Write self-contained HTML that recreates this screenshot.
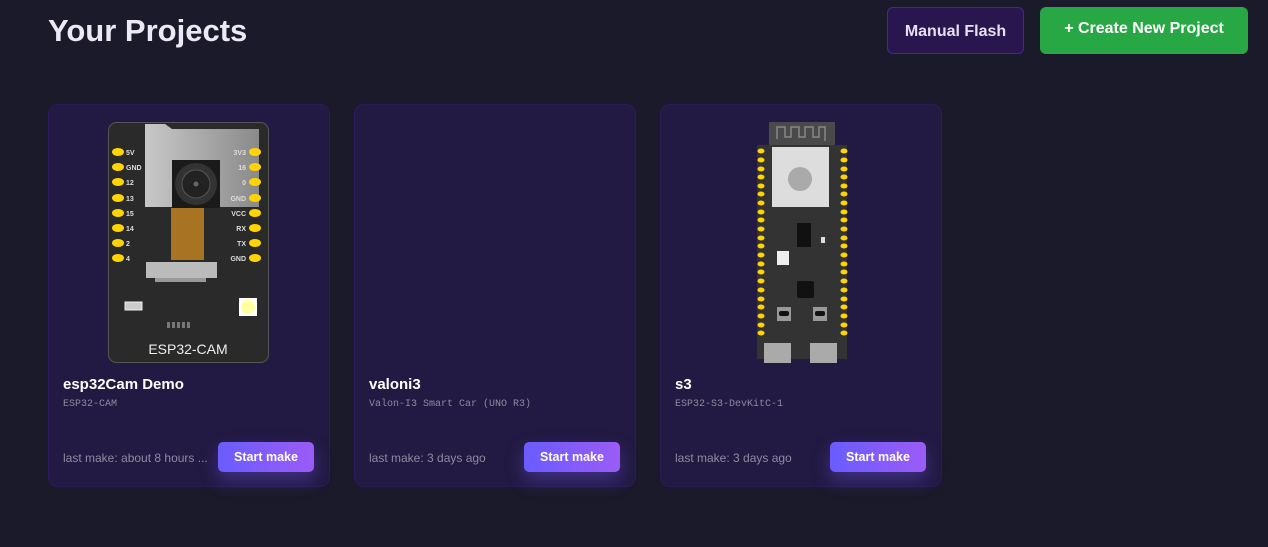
<!DOCTYPE html>
<html><head><meta charset="utf-8"><style>
*{box-sizing:border-box;margin:0;padding:0}
body{width:1268px;height:547px;background:#1b1a2b;font-family:"Liberation Sans",sans-serif;position:relative;overflow:hidden;color:#fff}
h1{position:absolute;left:48px;top:13px;font-size:31px;font-weight:bold;color:#ece8f4}
.mf{position:absolute;left:887px;top:7px;width:137px;height:47px;border:1px solid #4a23a0;border-radius:6px;background:#29164f;color:#e6e0f2;font-weight:bold;font-size:16px;text-align:center;line-height:47px}
.cn{position:absolute;left:1040px;top:7px;width:208px;height:47px;border-radius:6px;background:#28a745;color:#fff;font-weight:bold;font-size:16px;text-align:center;line-height:44px}
.card{position:absolute;top:104px;width:282px;height:383px;border:1px solid #2d1a5a;border-radius:10px;background:#221a42}
.t{position:absolute;left:14px;top:271px;font-size:15px;font-weight:bold;color:#fff}
.s{position:absolute;left:14px;top:294px;font-size:10px;font-family:"Liberation Mono",monospace;color:#8f8aa0}
.lm{position:absolute;left:14px;top:346px;font-size:12px;color:#8f8aa0}
.b{position:absolute;left:169px;top:337px;width:96px;height:30px;border-radius:5px;background:linear-gradient(90deg,#6a5cff,#9b5cf6);color:#fff;font-size:12.5px;font-weight:bold;text-align:center;line-height:30px;box-shadow:0 8px 18px rgba(120,90,255,.35)}
</style></head><body>
<h1>Your Projects</h1>
<div class="mf">Manual Flash</div>
<div class="cn">+ Create New Project</div>

<div class="card" style="left:48px">
<svg style="position:absolute;left:59px;top:17px" width="162" height="242" viewBox="0 0 162 242">
<defs><linearGradient id="g"><stop offset="0" stop-color="#c8c8c8"/><stop offset="1" stop-color="#8a8a8a"/></linearGradient></defs>
<rect x="0.5" y="0.5" width="160" height="240" rx="8" fill="#2a2a2a" stroke="#555"/>
<polygon points="37,2 57,2 64,7 151,7 151,85 37,85" fill="url(#g)"/>
<rect x="64" y="38" width="48" height="48" fill="#1a1a1a"/>
<circle cx="88" cy="62" r="21" fill="#333"/><circle cx="88" cy="62" r="14" fill="#222" stroke="#555"/><circle cx="88" cy="62" r="2.5" fill="#666"/>
<rect x="63" y="86" width="33" height="52" fill="#a87424"/>
<rect x="38" y="140" width="71" height="16" fill="#bbb"/><rect x="47" y="156" width="51" height="4" fill="#999"/>
<rect x="17" y="180" width="17" height="8" fill="#ccc" stroke="#eee"/>
<rect x="131" y="176" width="18" height="18" fill="#fff"/><circle cx="140" cy="185" r="7" fill="#ffffa0"/>
<g fill="#777"><rect x="59" y="200" width="3" height="6"/><rect x="64" y="200" width="3" height="6"/><rect x="69" y="200" width="3" height="6"/><rect x="74" y="200" width="3" height="6"/><rect x="79" y="200" width="3" height="6"/></g>
<text x="80" y="232" font-size="14" fill="#eee" text-anchor="middle" font-family="Liberation Sans">ESP32-CAM</text>
<g fill="#ffd400">
<ellipse cx="10" cy="30" rx="6" ry="4"/><ellipse cx="10" cy="45" rx="6" ry="4"/><ellipse cx="10" cy="60" rx="6" ry="4"/><ellipse cx="10" cy="76" rx="6" ry="4"/><ellipse cx="10" cy="91" rx="6" ry="4"/><ellipse cx="10" cy="106" rx="6" ry="4"/><ellipse cx="10" cy="121" rx="6" ry="4"/><ellipse cx="10" cy="136" rx="6" ry="4"/>
<ellipse cx="147" cy="30" rx="6" ry="4"/><ellipse cx="147" cy="45" rx="6" ry="4"/><ellipse cx="147" cy="60" rx="6" ry="4"/><ellipse cx="147" cy="76" rx="6" ry="4"/><ellipse cx="147" cy="91" rx="6" ry="4"/><ellipse cx="147" cy="106" rx="6" ry="4"/><ellipse cx="147" cy="121" rx="6" ry="4"/><ellipse cx="147" cy="136" rx="6" ry="4"/></g>
<g fill="#ddd" font-size="7" font-weight="bold" font-family="Liberation Sans">
<text x="18" y="33">5V</text><text x="18" y="48">GND</text><text x="18" y="63">12</text><text x="18" y="79">13</text><text x="18" y="94">15</text><text x="18" y="109">14</text><text x="18" y="124">2</text><text x="18" y="139">4</text>
<g text-anchor="end"><text x="138" y="33">3V3</text><text x="138" y="48">16</text><text x="138" y="63">0</text><text x="138" y="79">GND</text><text x="138" y="94">VCC</text><text x="138" y="109">RX</text><text x="138" y="124">TX</text><text x="138" y="139">GND</text></g></g>
</svg>
<div class="t">esp32Cam Demo</div><div class="s">ESP32-CAM</div>
<div class="lm">last make: about 8 hours ...</div><div class="b">Start make</div>
</div>

<div class="card" style="left:354px">
<div class="t">valoni3</div><div class="s">Valon-I3 Smart Car (UNO R3)</div>
<div class="lm">last make: 3 days ago</div><div class="b">Start make</div>
</div>

<div class="card" style="left:660px">
<svg style="position:absolute;left:96px;top:16px" width="92" height="244" viewBox="0 0 92 244">
<rect x="12" y="1" width="66" height="24" fill="#4a4a4a"/>
<path d="M20 18V6h8v10h6V6h8v10h6V6h8v10h6V6h6v14" stroke="#888" fill="none" stroke-width="1.5"/>
<rect x="0" y="24" width="90" height="214" fill="#333"/>
<rect x="15" y="26" width="57" height="60" fill="#ddd"/>
<circle cx="43" cy="58" r="12" fill="#aaa"/>
<rect x="40" y="102" width="14" height="24" fill="#111"/><rect x="64" y="116" width="4" height="6" fill="#ddd"/>
<rect x="20" y="130" width="12" height="14" fill="#eee"/>
<rect x="40" y="160" width="17" height="17" rx="2" fill="#111"/>
<rect x="20" y="186" width="14" height="14" fill="#999"/><rect x="22" y="190" width="10" height="5" rx="2" fill="#111"/>
<rect x="56" y="186" width="14" height="14" fill="#999"/><rect x="58" y="190" width="10" height="5" rx="2" fill="#111"/>
<rect x="7" y="222" width="27" height="20" fill="#aaa"/><rect x="53" y="222" width="27" height="20" fill="#aaa"/>
<g fill="#ffd400">
<ellipse cx="4" cy="30" rx="3.5" ry="2.5"/><ellipse cx="4" cy="39" rx="3.5" ry="2.5"/><ellipse cx="4" cy="48" rx="3.5" ry="2.5"/><ellipse cx="4" cy="56" rx="3.5" ry="2.5"/><ellipse cx="4" cy="65" rx="3.5" ry="2.5"/><ellipse cx="4" cy="73" rx="3.5" ry="2.5"/><ellipse cx="4" cy="82" rx="3.5" ry="2.5"/><ellipse cx="4" cy="91" rx="3.5" ry="2.5"/><ellipse cx="4" cy="99" rx="3.5" ry="2.5"/><ellipse cx="4" cy="108" rx="3.5" ry="2.5"/><ellipse cx="4" cy="117" rx="3.5" ry="2.5"/><ellipse cx="4" cy="125" rx="3.5" ry="2.5"/><ellipse cx="4" cy="134" rx="3.5" ry="2.5"/><ellipse cx="4" cy="143" rx="3.5" ry="2.5"/><ellipse cx="4" cy="151" rx="3.5" ry="2.5"/><ellipse cx="4" cy="160" rx="3.5" ry="2.5"/><ellipse cx="4" cy="169" rx="3.5" ry="2.5"/><ellipse cx="4" cy="178" rx="3.5" ry="2.5"/><ellipse cx="4" cy="186" rx="3.5" ry="2.5"/><ellipse cx="4" cy="195" rx="3.5" ry="2.5"/><ellipse cx="4" cy="204" rx="3.5" ry="2.5"/><ellipse cx="4" cy="212" rx="3.5" ry="2.5"/>
<ellipse cx="87" cy="30" rx="3.5" ry="2.5"/><ellipse cx="87" cy="39" rx="3.5" ry="2.5"/><ellipse cx="87" cy="48" rx="3.5" ry="2.5"/><ellipse cx="87" cy="56" rx="3.5" ry="2.5"/><ellipse cx="87" cy="65" rx="3.5" ry="2.5"/><ellipse cx="87" cy="73" rx="3.5" ry="2.5"/><ellipse cx="87" cy="82" rx="3.5" ry="2.5"/><ellipse cx="87" cy="91" rx="3.5" ry="2.5"/><ellipse cx="87" cy="99" rx="3.5" ry="2.5"/><ellipse cx="87" cy="108" rx="3.5" ry="2.5"/><ellipse cx="87" cy="117" rx="3.5" ry="2.5"/><ellipse cx="87" cy="125" rx="3.5" ry="2.5"/><ellipse cx="87" cy="134" rx="3.5" ry="2.5"/><ellipse cx="87" cy="143" rx="3.5" ry="2.5"/><ellipse cx="87" cy="151" rx="3.5" ry="2.5"/><ellipse cx="87" cy="160" rx="3.5" ry="2.5"/><ellipse cx="87" cy="169" rx="3.5" ry="2.5"/><ellipse cx="87" cy="178" rx="3.5" ry="2.5"/><ellipse cx="87" cy="186" rx="3.5" ry="2.5"/><ellipse cx="87" cy="195" rx="3.5" ry="2.5"/><ellipse cx="87" cy="204" rx="3.5" ry="2.5"/><ellipse cx="87" cy="212" rx="3.5" ry="2.5"/></g>
</svg>
<div class="t">s3</div><div class="s">ESP32-S3-DevKitC-1</div>
<div class="lm">last make: 3 days ago</div><div class="b">Start make</div>
</div>
</body></html>
